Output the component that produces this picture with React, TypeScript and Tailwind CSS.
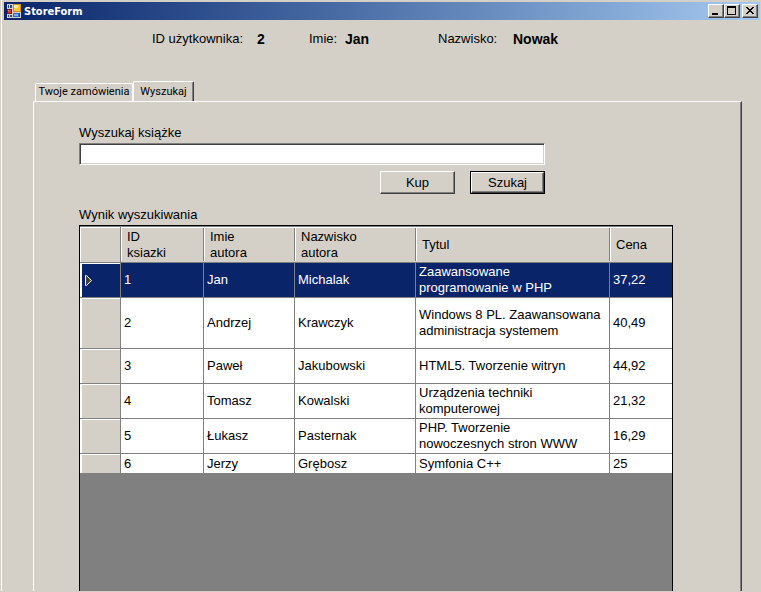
import { useState } from "react";

type Book = {
  id: string;
  first: string;
  last: string;
  title: string;
  price: string;
  height: string;
};

const books: Book[] = [
  { id: "1", first: "Jan", last: "Michalak", title: "Zaawansowane\nprogramowanie w PHP", price: "37,22", height: "h-[35px]" },
  { id: "2", first: "Andrzej", last: "Krawczyk", title: "Windows 8 PL. Zaawansowana\nadministracja systemem", price: "40,49", height: "h-[51px]" },
  { id: "3", first: "Paweł", last: "Jakubowski", title: "HTML5. Tworzenie witryn", price: "44,92", height: "h-[35px]" },
  { id: "4", first: "Tomasz", last: "Kowalski", title: "Urządzenia techniki\nkomputerowej", price: "21,32", height: "h-[35px]" },
  { id: "5", first: "Łukasz", last: "Pasternak", title: "PHP. Tworzenie\nnowoczesnych stron WWW", price: "16,29", height: "h-[35px]" },
  { id: "6", first: "Jerzy", last: "Grębosz", title: "Symfonia C++", price: "25", height: "h-[19px]" },
];

const columns = ["ID ksiazki", "Imie autora", "Nazwisko autora", "Tytul", "Cena"];

const raised =
  "border border-t-white border-l-white border-r-[#404040] border-b-[#404040] bg-[#d4d0c8] shadow-[inset_-1px_-1px_0_#808080]";

function AppIcon() {
  return (
    <svg width="14" height="14" viewBox="0 0 14 14" shapeRendering="crispEdges" aria-hidden="true">
      <rect width="14" height="14" fill="#d4d0c8" />
      <rect x="1" y="1" width="4" height="3" fill="#31456f" />
      <rect x="2" y="1" width="1" height="3" fill="#d4d0c8" />
      <rect x="6" y="0" width="8" height="8" fill="#c98f22" />
      <rect x="7" y="1" width="6" height="6" fill="#fbc537" />
      <rect x="7" y="1" width="4" height="3" fill="#ffe898" />
      <rect x="0" y="5" width="5" height="5" fill="#8c1111" />
      <rect x="1" y="6" width="3" height="3" fill="#d63a2c" />
      <rect x="1" y="6" width="1" height="1" fill="#f59a8a" />
      <rect x="1" y="11" width="4" height="2" fill="#31456f" />
      <rect x="2" y="11" width="1" height="2" fill="#d4d0c8" />
      <rect x="6" y="9" width="6" height="4" fill="#2f68cc" />
      <rect x="7" y="10" width="4" height="2" fill="#7fb0f5" />
      <rect x="12" y="9" width="1" height="4" fill="#31456f" />
    </svg>
  );
}

function TitleBar() {
  const button = `flex h-[14px] w-4 items-center justify-center ${raised}`;
  return (
    <header className="flex h-[18px] items-center bg-linear-to-r from-[#0a246a] to-[#a6caf0] pr-[2px] pl-[3px]">
      <AppIcon />
      <h1 className="ml-[3px] flex-1 pt-px font-['DejaVu_Sans_Condensed','DejaVu_Sans',sans-serif] text-[11px] leading-4 font-bold text-white">
        StoreForm
      </h1>
      <button type="button" aria-label="Minimize" className={button}>
        <svg width="14" height="12" viewBox="0 0 14 12" shapeRendering="crispEdges">
          <path d="M3 8h6v2H3z" />
        </svg>
      </button>
      <button type="button" aria-label="Maximize" className={button}>
        <svg width="14" height="12" viewBox="0 0 14 12" shapeRendering="crispEdges">
          <path fillRule="evenodd" d="M2 1h9v9H2zM3 3v6h7V3z" />
        </svg>
      </button>
      <button type="button" aria-label="Close" className={`ml-[2px] ${button}`}>
        <svg width="14" height="12" viewBox="0 0 14 12" shapeRendering="crispEdges">
          <path d="M3 2h2v1h1v1h2v-1h1v-1h2v1h-1v1h-1v1h-1v1h1v1h1v1h1v1H9V8H8V7H6v1H5v1H3V8h1V7h1V6h1V5H5V4H4V3H3z" />
        </svg>
      </button>
    </header>
  );
}

function UserInfo() {
  const value = "text-[14px] leading-4 font-bold";
  return (
    <dl className="grid grid-cols-[105px_52px_36px_93px_75px_auto] pt-[11px] pl-[148px] leading-4">
      <dt>ID użytkownika:</dt>
      <dd className={value}>2</dd>
      <dt>Imie:</dt>
      <dd className={value}>Jan</dd>
      <dt>Nazwisko:</dt>
      <dd className={value}>Nowak</dd>
    </dl>
  );
}

function ResultTable() {
  const [selected, setSelected] = useState("1");
  return (
    <div className="flex-1 border border-b-0 border-black bg-[#808080]">
      <table aria-labelledby="results" className="w-full table-fixed border-separate border-spacing-0 text-left leading-4">
        <colgroup>
          <col className="w-[41px]" />
          <col className="w-[83px]" />
          <col className="w-[91px]" />
          <col className="w-[121px]" />
          <col />
          <col className="w-[62px]" />
        </colgroup>
        <thead>
          <tr className="h-[37px] bg-[#d4d0c8]">
            <td className="border-y border-r border-[#808080] p-0">
              <div className="h-[35px] border-t border-l border-white" />
            </td>
            {columns.map((name) => (
              <th key={name} scope="col" className="group border-y border-[#808080] p-0 font-normal">
                <div className="border-t border-white pb-px">
                  <div className="flex h-[33px] items-center border-r border-l border-r-[#808080] border-l-white pr-10 pl-[5px] group-last:border-r-0 group-last:pr-0">
                    {name}
                  </div>
                </div>
              </th>
            ))}
          </tr>
        </thead>
        <tbody>
          {books.map((book) => {
            const active = book.id === selected;
            const cell =
              "border-r border-b border-[#808080] py-0 pr-0 pl-[3px] align-middle whitespace-pre-line last:border-r-0 group-last:border-b-0";
            return (
              <tr
                key={book.id}
                onClick={() => setSelected(book.id)}
                className={`group ${book.height} ${active ? "bg-[#0a246a] text-white" : "bg-white"}`}
              >
                <td
                  className={`border-r border-b border-[#808080] p-0 align-middle shadow-[inset_2px_0_0_#fff,inset_0_1px_0_#fff] group-last:border-b-0 ${
                    active ? "" : "bg-[#d4d0c8]"
                  }`}
                >
                  {active && (
                    <svg className="ml-[5px] block" width="8" height="11" viewBox="0 0 8 11" aria-hidden="true">
                      <path d="M.5 .5L1.500 .5L6.500 5.500L1.500 10.500L.5 10.500Z" fill="#404040" stroke="#fff" />
                    </svg>
                  )}
                </td>
                <td className={cell}>{book.id}</td>
                <td className={cell}>{book.first}</td>
                <td className={cell}>{book.last}</td>
                <td className={cell}>{book.title}</td>
                <td className={cell}>{book.price}</td>
              </tr>
            );
          })}
        </tbody>
      </table>
    </div>
  );
}

export default function App() {
  return (
    <div className="flex min-h-screen flex-col bg-[#d4d0c8] pb-px pl-px font-['Liberation_Sans',Arial,sans-serif] text-[13px] text-black">
      <div className="flex flex-1 flex-col border-l border-white pt-[2px] pr-px pl-[2px]">
        <TitleBar />
        <UserInfo />
        <main className="mt-[34px] mr-[18px] ml-[29px] flex flex-1 flex-col">
          <div role="tablist" className="flex items-end pl-[2px] font-[Roboto,sans-serif] text-[11px]">
            <button
              type="button"
              role="tab"
              aria-selected="false"
              className="h-[18px] w-[98px] rounded-t-[2px] border border-b-0 border-white text-center whitespace-nowrap"
            >
              Twoje zamówienia
            </button>
            <button
              type="button"
              role="tab"
              aria-selected="true"
              className="-mb-px h-[21px] w-[61px] rounded-t-[2px] border border-b-0 border-white border-r-[#404040] bg-[#d4d0c8] text-center shadow-[inset_-1px_0_0_#808080]"
            >
              Wyszukaj
            </button>
          </div>
          <section
            role="tabpanel"
            className="flex flex-1 flex-col border border-b-0 border-white border-r-[#404040] pt-[23px] pr-[68px] pl-[45px] shadow-[inset_-1px_0_0_#808080]"
          >
            <form className="mr-32 flex flex-col" onSubmit={(event) => event.preventDefault()}>
              <label htmlFor="query" className="leading-4">
                Wyszukaj książke
              </label>
              <input
                id="query"
                type="text"
                className="mt-[2px] h-[22px] w-full border border-t-[#808080] border-r-white border-b-white border-l-[#808080] bg-white px-1 shadow-[inset_1px_1px_0_#404040,inset_-1px_-1px_0_#d4d0c8] outline-none"
              />
              <div className="mt-[6px] flex justify-end gap-[15px]">
                <button type="button" className={`h-[23px] w-[75px] ${raised}`}>
                  Kup
                </button>
                <button type="submit" className="h-[23px] w-[75px] border border-black">
                  <span className={`flex h-full items-center justify-center ${raised}`}>Szukaj</span>
                </button>
              </div>
            </form>
            <h2 id="results" className="mt-[13px] mb-[2px] leading-4">
              Wynik wyszukiwania
            </h2>
            <ResultTable />
          </section>
        </main>
      </div>
    </div>
  );
}
